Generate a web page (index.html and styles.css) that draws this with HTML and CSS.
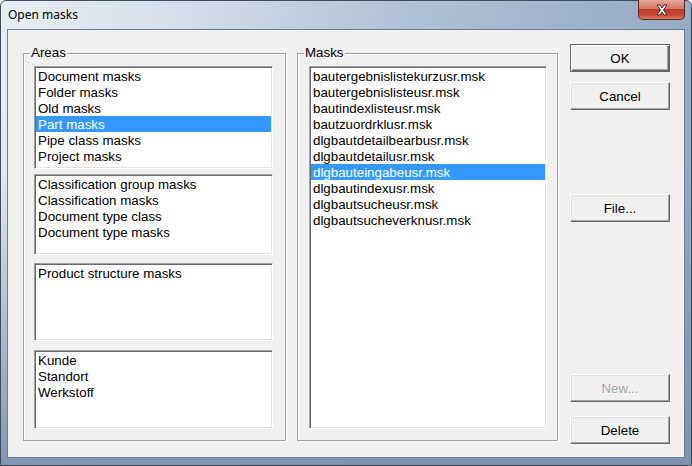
FILE: index.html
```html
<!DOCTYPE html>
<html lang="en">
<head>
    <meta charset="UTF-8">
    <title>Open masks</title>
    <link rel="stylesheet" href="styles.css">
</head>
<body>

<div class="window">
    <div class="titlebar">
        <div class="title">Open masks</div>
        <div class="close-btn">
            <svg width="14" height="12" viewBox="0 0 14 12">
                <path d="M2 1 L5 1 L7 4 L9 1 L12 1 L8.5 6 L12 11 L9 11 L7 8 L5 11 L2 11 L5.5 6 Z" fill="#fff" stroke="#4a2020" stroke-width="1" stroke-linejoin="round"/>
            </svg>
        </div>
    </div>

    <div class="client">
        <div class="group group-areas">
            <div class="group-label">Areas</div>
            <div class="listbox list-1">
                <div class="item">Document masks</div>
                <div class="item">Folder masks</div>
                <div class="item">Old masks</div>
                <div class="item selected">Part masks</div>
                <div class="item">Pipe class masks</div>
                <div class="item">Project masks</div>
            </div>
            <div class="listbox list-2">
                <div class="item">Classification group masks</div>
                <div class="item">Classification masks</div>
                <div class="item">Document type class</div>
                <div class="item">Document type masks</div>
            </div>
            <div class="listbox list-3">
                <div class="item">Product structure masks</div>
            </div>
            <div class="listbox list-4">
                <div class="item">Kunde</div>
                <div class="item">Standort</div>
                <div class="item">Werkstoff</div>
            </div>
        </div>

        <div class="group group-masks">
            <div class="group-label">Masks</div>
            <div class="listbox list-masks">
                <div class="item">bautergebnislistekurzusr.msk</div>
                <div class="item">bautergebnislisteusr.msk</div>
                <div class="item">bautindexlisteusr.msk</div>
                <div class="item">bautzuordrklusr.msk</div>
                <div class="item">dlgbautdetailbearbusr.msk</div>
                <div class="item">dlgbautdetailusr.msk</div>
                <div class="item selected">dlgbauteingabeusr.msk</div>
                <div class="item">dlgbautindexusr.msk</div>
                <div class="item">dlgbautsucheusr.msk</div>
                <div class="item">dlgbautsucheverknusr.msk</div>
            </div>
        </div>

        <div class="buttons">
            <button class="btn btn-default">OK</button>
            <button class="btn btn-cancel">Cancel</button>
            <button class="btn btn-file">File...</button>
            <button class="btn btn-new" disabled>New...</button>
            <button class="btn btn-delete">Delete</button>
        </div>
    </div>
</div>

</body>
</html>
```

FILE: styles.css
```css
body {
    margin: 0;
    padding: 0;
    width: 692px;
    height: 466px;
    overflow: hidden;
    font-family: "Liberation Sans", Arial, sans-serif;
    font-size: 13.33px;
    color: #000;
}

.window {
    box-sizing: border-box;
    width: 692px;
    height: 466px;
    border: 1px solid #3d4c5f;
    border-radius: 6px 6px 0 0;
    padding: 0 6px 7px 6px;
    background:
        linear-gradient(to bottom, rgba(130, 152, 180, 0) 0%, rgba(130, 152, 180, 0) 35%, rgba(124, 146, 174, 0.95) 100%),
        linear-gradient(100deg, #e8eef5 0%, #d3dde9 25%, #b4c4d6 50%, #9fb3ca 75%, #90a6c0 100%);
}

.titlebar {
    height: 28px;
    display: flex;
    justify-content: space-between;
    align-items: flex-start;
}

.title {
    font-family: "Noto Sans", "Liberation Sans", sans-serif;
    font-size: 12px;
    line-height: 16px;
    padding: 6px 0 0 1px;
    color: #000;
}

.close-btn {
    width: 45px;
    height: 19px;
    margin-top: -1px;
    border: 1px solid #5c2a25;
    border-top: none;
    border-radius: 0 0 5px 5px;
    background: linear-gradient(to bottom, #e7a79a 0%, #d47766 45%, #c0392b 50%, #c94a3a 80%, #e07a62 100%);
    display: flex;
    align-items: center;
    justify-content: center;
}

.client {
    box-sizing: border-box;
    height: 429px;
    border: 1px solid #6e7f95;
    background-color: #f0f0f0;
    padding: 14px 0 0 15px;
    display: flex;
    align-items: flex-start;
}

.group {
    position: relative;
    box-sizing: border-box;
    height: 388px;
    margin-top: 9px;
    border: 1px solid #a0a0a0;
    box-shadow: inset 1px 1px 0 #fff, 1px 1px 0 #fff;
    padding-top: 12px;
    display: flex;
    flex-direction: column;
}

.group-areas {
    width: 263px;
    padding-left: 10px;
    padding-right: 12px;
}

.group-masks {
    width: 261px;
    margin-left: 11px;
    padding-left: 11px;
    padding-right: 10px;
}

.group-label {
    position: absolute;
    top: -9px;
    left: 6px;
    padding: 0 1px;
    line-height: 16px;
    background-color: #f0f0f0;
}

.listbox {
    box-sizing: border-box;
    background-color: #fff;
    border-top: 1px solid #a0a0a0;
    border-left: 1px solid #a0a0a0;
    border-bottom: 1px solid #fff;
    border-right: 1px solid #fff;
    box-shadow: inset 1px 1px 0 #696969, inset -1px -1px 0 #e3e3e3;
    padding: 1px;
    overflow: hidden;
}

.list-1 { height: 103px; }
.list-2 { height: 81px; margin-top: 5px; }
.list-3 { height: 78px; margin-top: 8px; }
.list-4 { height: 79px; margin-top: 9px; }
.list-masks { height: 363px; }

.item {
    height: 16px;
    line-height: 17px;
    padding-left: 2px;
    white-space: nowrap;
}

.item.selected {
    background-color: #3399ff;
    color: #fff;
}

.buttons {
    display: flex;
    flex-direction: column;
    width: 100px;
    margin-left: 12px;
}

.btn {
    box-sizing: border-box;
    width: 100px;
    height: 28px;
    padding: 0;
    font-family: "Liberation Sans", Arial, sans-serif;
    font-size: 13.33px;
    color: #000;
    background-color: #f0f0f0;
    border-top: 1px solid #fff;
    border-left: 1px solid #fff;
    border-bottom: 1px solid #696969;
    border-right: 1px solid #696969;
    box-shadow: inset -1px -1px 0 #a0a0a0, inset 1px 1px 0 #e3e3e3;
}

.btn-default {
    border: 1px solid #646464;
    box-shadow: inset 1px 1px 0 #fff, inset -1px -1px 0 #696969, inset -2px -2px 0 #a0a0a0;
}

.btn-cancel { margin-top: 10px; }
.btn-file { margin-top: 84px; }
.btn-new { margin-top: 152px; }
.btn-delete { margin-top: 14px; }

.btn:disabled {
    color: #a0a0a0;
    text-shadow: 1px 1px 0 #fff;
}
```
